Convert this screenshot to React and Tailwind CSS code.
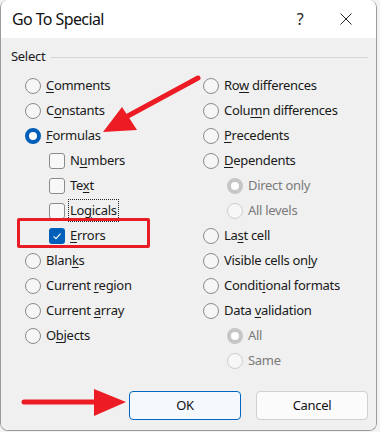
import React from "react";

/* ---------- helpers ---------- */
function Label({ text, k, disabled }) {
  // k = index of the access key letter (underlined)
  const cls = disabled ? "text-[#7a7a7a]" : "text-[#1a1a1a]";
  if (k == null) return <span className={cls}>{text}</span>;
  return (
    <span className={cls}>
      {text.slice(0, k)}
      <span className="underline underline-offset-[2px] decoration-1">{text[k]}</span>
      {text.slice(k + 1)}
    </span>
  );
}

function Radio({ checked, disabled }) {
  if (checked && !disabled)
    return <span className="w-[16px] h-[16px] rounded-full border-[4px] border-[#005fb8] bg-white shrink-0" />;
  if (checked && disabled)
    return <span className="w-[16px] h-[16px] rounded-full border-[4px] border-[#c6c6c6] bg-white shrink-0" />;
  if (disabled)
    return <span className="w-[16px] h-[16px] rounded-full border border-[#cdcdcd] bg-[#f7f7f7] shrink-0" />;
  return <span className="w-[16px] h-[16px] rounded-full border border-[#8b8b8b] bg-[#f6f6f6] shrink-0" />;
}

function Check({ checked }) {
  if (checked)
    return (
      <span className="w-[16px] h-[16px] rounded-[3px] bg-[#005fb8] shrink-0 flex items-center justify-center">
        <svg width="16" height="16" viewBox="0 0 16 16">
          <polyline points="4.5,8.3 7,10.6 11.5,5.6" fill="none" stroke="#fff" strokeWidth="1.1" />
        </svg>
      </span>
    );
  return <span className="w-[16px] h-[16px] rounded-[3px] border border-[#8b8b8b] bg-[#f8f8f8] shrink-0" />;
}

function Row({ kind = "radio", indent, checked, disabled, text, k, focus }) {
  return (
    <div className={`h-[25px] flex items-center gap-[5px] ${indent ? "pl-[24px]" : ""}`}>
      {kind === "radio" ? <Radio checked={checked} disabled={disabled} /> : <Check checked={checked} />}
      {focus ? (
        <span className="border border-dotted border-[#222] px-[1px] leading-[21px] -ml-[2px]">
          <Label text={text} k={k} disabled={disabled} />
        </span>
      ) : (
        <Label text={text} k={k} disabled={disabled} />
      )}
    </div>
  );
}

/* ---------- data ---------- */
const left = [
  { text: "Comments", k: 0 },
  { text: "Constants", k: 1 },
  { text: "Formulas", k: 0, checked: true },
  { text: "Numbers", k: 1, kind: "check", indent: true },
  { text: "Text", k: 2, kind: "check", indent: true },
  { text: "Logicals", k: 2, kind: "check", indent: true, focus: true },
  { text: "Errors", k: 0, kind: "check", indent: true, checked: true },
  { text: "Blanks", k: 4 },
  { text: "Current region", k: 8 },
  { text: "Current array", k: 8 },
  { text: "Objects", k: 1 },
];

const right = [
  { text: "Row differences", k: 2 },
  { text: "Column differences", k: 4 },
  { text: "Precedents", k: 0 },
  { text: "Dependents", k: 0 },
  { text: "Direct only", indent: true, disabled: true, checked: true },
  { text: "All levels", indent: true, disabled: true },
  { text: "Last cell", k: 2 },
  { text: "Visible cells only", k: 16 },
  { text: "Conditional formats", k: 6 },
  { text: "Data validation", k: 5 },
  { text: "All", indent: true, disabled: true, checked: true },
  { text: "Same", indent: true, disabled: true },
];

export default function App() {
  return (
    <div className="relative w-[380px] h-[432px] bg-[#f3f3f3] font-['Noto_Sans',sans-serif] text-[13px] tracking-[-0.3px]">
      <div className="w-[377px] h-[431px] flex flex-col border border-t-0 border-[#9a9a9a] rounded-[8px] overflow-hidden">
        {/* title bar */}
        <div className="h-[38px] bg-white flex items-center shrink-0">
          <div className="pl-[11px] text-[16px] tracking-[-0.6px] text-[#111] leading-none">Go To Special</div>
          <div className="ml-auto w-[46px] text-center text-[16px] text-[#222]">?</div>
          <div className="w-[46px] flex items-center justify-center mr-[7px]">
            <svg width="12" height="12" viewBox="0 0 12 12">
              <path d="M0.5 0.5 L11.5 11.5 M11.5 0.5 L0.5 11.5" stroke="#222" strokeWidth="1" />
            </svg>
          </div>
        </div>

        {/* body */}
        <div className="flex-1 bg-[#f0f0f0] pt-[9px]">
          <div className="h-[20px] flex items-center pl-[10px] pr-[8px] gap-[6px]">
            <span className="text-[#1a1a1a]">Select</span>
            <div className="flex-1 h-px bg-[#d6d6d6]" />
          </div>

          <div className="mt-[6px] flex pl-[24px]">
            <div className="w-[178px]">
              {left.map((r) => (
                <Row key={r.text} {...r} />
              ))}
            </div>
            <div>
              {right.map((r) => (
                <Row key={r.text + (r.indent ? "-i" : "")} {...r} />
              ))}
            </div>
          </div>

          <div className="mt-[18px] flex pl-[128px] gap-[15px]">
            <button className="w-[112px] h-[29px] rounded-[4px] border border-[#0067c0] bg-[#f5f9fd] text-[#111]">
              OK
            </button>
            <button className="w-[112px] h-[29px] rounded-[4px] border border-[#d0d0d0] bg-[#fbfbfb] text-[#111]">
              Cancel
            </button>
          </div>
        </div>
      </div>

      {/* red highlight box */}
      <div className="absolute left-[17px] top-[218px] w-[133px] h-[30px] border-[3px] border-[#e81c24] rounded-[2px] pointer-events-none" />

      {/* arrows */}
      <svg className="absolute left-0 top-0 pointer-events-none" width="380" height="432" viewBox="0 0 380 432">
        <line x1="198" y1="78" x2="126" y2="117" stroke="#ed1c24" strokeWidth="5" strokeLinecap="round" />
        <polygon points="103,132 122,107 137,130" fill="#ed1c24" />
        <line x1="24" y1="402" x2="96" y2="402" stroke="#ed1c24" strokeWidth="5" strokeLinecap="round" />
        <polygon points="94,389 126,402 94,416" fill="#ed1c24" />
      </svg>
    </div>
  );
}
